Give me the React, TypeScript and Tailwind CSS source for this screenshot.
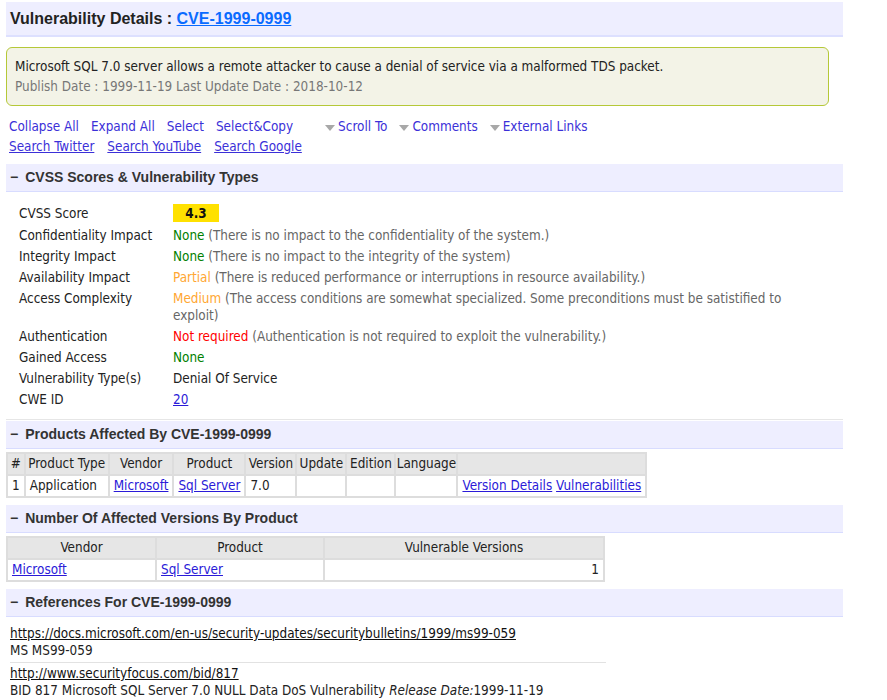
import React from "react";

const body = "font-['DejaVu_Sans_Condensed','DejaVu_Sans',sans-serif]";
const head = "font-['Liberation_Sans',Arial,sans-serif]";

function SectionHeader({ title }: { title: string }) {
  return (
    <div className={`${head} bg-[#eeeeff] border-b border-[#d8dcff] h-[28px] flex items-center pl-[4px] text-[14px] font-bold text-[#333]`}>
      <span className="mr-[7px]">−</span>
      {title}
    </div>
  );
}

function Tri() {
  return (
    <svg width="10" height="6" viewBox="0 0 10 6" className="mr-[3px] mt-[1px]">
      <polygon points="0,0 10,0 5,6" fill="#a8a8a8" />
    </svg>
  );
}

const rows: { label: string; value: React.ReactNode }[] = [
  {
    label: "Confidentiality Impact",
    value: (
      <>
        <span className="text-[#008000]">None</span>{" "}
        <span className="text-[#666]">(There is no impact to the confidentiality of the system.)</span>
      </>
    ),
  },
  {
    label: "Integrity Impact",
    value: (
      <>
        <span className="text-[#008000]">None</span>{" "}
        <span className="text-[#666]">(There is no impact to the integrity of the system)</span>
      </>
    ),
  },
  {
    label: "Availability Impact",
    value: (
      <>
        <span className="text-[#ffa733]">Partial</span>{" "}
        <span className="text-[#666]">(There is reduced performance or interruptions in resource availability.)</span>
      </>
    ),
  },
  {
    label: "Access Complexity",
    value: (
      <>
        <span className="text-[#ffa733]">Medium</span>{" "}
        <span className="text-[#666]">
          (The access conditions are somewhat specialized. Some preconditions must be satistified to exploit)
        </span>
      </>
    ),
  },
  {
    label: "Authentication",
    value: (
      <>
        <span className="text-[#ff0000]">Not required</span>{" "}
        <span className="text-[#666]">(Authentication is not required to exploit the vulnerability.)</span>
      </>
    ),
  },
  { label: "Gained Access", value: <span className="text-[#008000]">None</span> },
  { label: "Vulnerability Type(s)", value: <span className="text-[#222]">Denial Of Service</span> },
  {
    label: "CWE ID",
    value: <a className="text-[#2a1ad8] underline">20</a>,
  },
];

const th = "font-normal border-2 border-[#dddddd] p-0 h-[22px] leading-[16px] whitespace-nowrap";
const td = "border-2 border-[#dddddd] px-[4px] h-[22px] leading-[16px] whitespace-nowrap";
const lnk = "underline text-[#2a1ad8]";

export default function App() {
  return (
    <div className={`${body} text-[13.4px] text-[#222] bg-white w-[887px] min-h-[700px] pt-[2px] pl-[6px] pr-[44px]`}>
      {/* title */}
      <div className={`${head} bg-[#eeeeff] border-b-2 border-[#dde0ff] h-[35px] flex items-center pl-[4px] text-[16px] font-bold text-[#222]`}>
        Vulnerability Details :&nbsp;
        <a className="text-[#0a6bff] underline">CVE-1999-0999</a>
      </div>

      {/* summary */}
      <div className="mt-[10px] mr-[14px] border border-[#b5c838] bg-[#f3f3e7] rounded-[6px] px-[8px] pt-[9px] pb-[8px] leading-[20px]">
        <div className="text-[#222]">
          Microsoft SQL 7.0 server allows a remote attacker to cause a denial of service via a malformed TDS packet.
        </div>
        <div className="text-[#777]">Publish Date : 1999-11-19 Last Update Date : 2018-10-12</div>
      </div>

      {/* links */}
      <div className="pt-[11px] pl-[3px] pb-[7px] leading-[20px] text-[#3b30d8]">
        <div className="flex items-center">
          <a className="mr-[12px]">Collapse All</a>
          <a className="mr-[12px]">Expand All</a>
          <a className="mr-[12px]">Select</a>
          <a className="mr-[32px]">Select&amp;Copy</a>
          <Tri />
          <a className="mr-[12px]">Scroll To</a>
          <Tri />
          <a className="mr-[12px]">Comments</a>
          <Tri />
          <a>External Links</a>
        </div>
        <div className="flex items-center">
          <a className="underline mr-[13px]">Search Twitter</a>
          <a className="underline mr-[13px]">Search YouTube</a>
          <a className="underline">Search Google</a>
        </div>
      </div>

      {/* CVSS */}
      <SectionHeader title="CVSS Scores & Vulnerability Types" />
      <div className="pt-[9px] pb-[9px] pl-[13px] border-b border-[#e6e6e6] leading-[17px]">
        <div className="flex items-center h-[24px]">
          <div className="w-[154px]">CVSS Score</div>
          <div className="bg-[#ffe100] w-[46px] h-[18px] flex items-center justify-center font-bold text-[#111]">4.3</div>
        </div>
        {rows.map((r) => (
          <div key={r.label} className="flex py-[2px]">
            <div className="w-[154px] shrink-0">{r.label}</div>
            <div className="w-[618px]">{r.value}</div>
          </div>
        ))}
      </div>

      {/* products */}
      <div className="mt-[1px]">
        <SectionHeader title="Products Affected By CVE-1999-0999" />
      </div>
      <table className="mt-[3px] border-collapse border border-[#dddddd]">
        <thead>
          <tr className="bg-[#e6e6e6]">
            <th className={`${th} w-[17px]`}>#</th>
            <th className={`${th} w-[84px]`}>Product Type</th>
            <th className={`${th} w-[64px]`}>Vendor</th>
            <th className={`${th} w-[72px]`}>Product</th>
            <th className={`${th} w-[51px]`}>Version</th>
            <th className={`${th} w-[50px]`}>Update</th>
            <th className={`${th} w-[49px]`}>Edition</th>
            <th className={`${th} w-[62px]`}>Language</th>
            <th className={`${th} w-[184px]`}></th>
          </tr>
        </thead>
        <tbody>
          <tr>
            <td className={`${td} px-[3px]`}>1</td>
            <td className={td}>Application</td>
            <td className={td}><a className={lnk}>Microsoft</a></td>
            <td className={td}><a className={lnk}>Sql Server</a></td>
            <td className={td}>7.0</td>
            <td className={td}></td>
            <td className={td}></td>
            <td className={td}></td>
            <td className={td}>
              <a className={lnk}>Version Details</a> <a className={lnk}>Vulnerabilities</a>
            </td>
          </tr>
        </tbody>
      </table>

      {/* versions */}
      <div className="mt-[7px]">
        <SectionHeader title="Number Of Affected Versions By Product" />
      </div>
      <table className="mt-[3px] border-collapse border border-[#dddddd] w-[599px]">
        <thead>
          <tr className="bg-[#e6e6e6]">
            <th className={`${th} w-[149px]`}>Vendor</th>
            <th className={`${th} w-[168px]`}>Product</th>
            <th className={th}>Vulnerable Versions</th>
          </tr>
        </thead>
        <tbody>
          <tr>
            <td className={td}><a className={lnk}>Microsoft</a></td>
            <td className={td}><a className={lnk}>Sql Server</a></td>
            <td className={`${td} text-right`}>1</td>
          </tr>
        </tbody>
      </table>

      {/* references */}
      <div className="mt-[7px]">
        <SectionHeader title="References For CVE-1999-0999" />
      </div>
      <div className="pl-[4px] pt-[8px] leading-[17px] w-[600px]">
        <div className="border-b border-[#e2e2e2] pb-[3px]">
          <a className="underline text-[#111]">https://docs.microsoft.com/en-us/security-updates/securitybulletins/1999/ms99-059</a>
          <div>MS MS99-059</div>
        </div>
        <div className="pt-[2px]">
          <a className="underline text-[#111]">http://www.securityfocus.com/bid/817</a>
          <div>
            BID 817 Microsoft SQL Server 7.0 NULL Data DoS Vulnerability <i>Release Date:</i>1999-11-19
          </div>
        </div>
      </div>
    </div>
  );
}
